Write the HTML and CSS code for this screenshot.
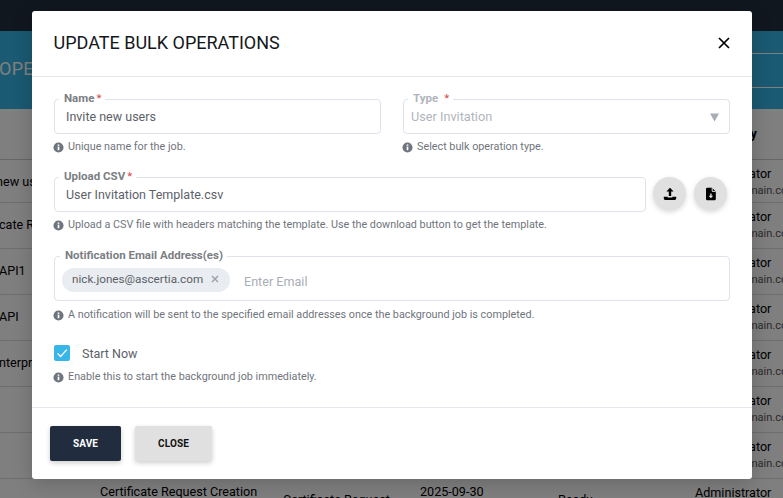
FILE: index.html
```html
<!DOCTYPE html>
<html lang="en">
<head>
<meta charset="utf-8">
<title>Update Bulk Operations</title>
<link rel="stylesheet" href="styles.css">
</head>
<body>
<div class="page">
  <div class="topbar"></div>
  <div class="band">
    <div class="band-title">OPERATIONS</div>
    <div class="band-lines"><i></i><i></i></div>
  </div>
  <div class="table">
    <div class="thead"><span class="c-by">Created By</span></div>
    <div class="row r1"><span class="c-a">new users</span><span class="c-by"><b>Administrator</b><small>admin@domain.com</small></span></div>
    <div class="row"><span class="c-a">cate Request</span><span class="c-by"><b>Administrator</b><small>admin@domain.com</small></span></div>
    <div class="row"><span class="c-a">API1</span><span class="c-by"><b>Administrator</b><small>admin@domain.com</small></span></div>
    <div class="row"><span class="c-a">API</span><span class="c-by"><b>Administrator</b><small>admin@domain.com</small></span></div>
    <div class="row"><span class="c-a">nterprise</span><span class="c-by"><b>Administrator</b><small>admin@domain.com</small></span></div>
    <div class="row"><span class="c-a"></span><span class="c-by"><b>Administrator</b><small>admin@domain.com</small></span></div>
    <div class="row"><span class="c-a"></span><span class="c-by"><b>Administrator</b><small>admin@domain.com</small></span></div>
    <div class="row last">
      <span class="c-a"></span>
      <span class="c-name">Certificate Request Creation</span>
      <span class="c-type">Certificate Request</span>
      <span class="c-date">2025-09-30</span>
      <span class="c-status">Ready</span>
      <span class="c-by"><b>Administrator</b></span>
    </div>
  </div>
  <div class="overlay"></div>
</div>

<section class="modal">
  <header class="modal-head">
    <h1>UPDATE BULK OPERATIONS</h1>
    <svg class="close-x" viewBox="0 0 12 12"><path d="M1 1l10 10M11 1L1 11"/></svg>
  </header>

  <div class="modal-body">
    <div class="two">
      <div class="field">
        <div class="box">
          <label class="lbl">Name<em>*</em></label>
          <span class="val">Invite new users</span>
        </div>
        <p class="help"><svg class="info" viewBox="0 0 12 12"><circle cx="6" cy="6" r="5.5"/><rect x="5.1" y="5" width="1.8" height="4" fill="#fff"/><rect x="5.1" y="2.7" width="1.8" height="1.5" fill="#fff"/></svg>Unique name for the job.</p>
      </div>
      <div class="field">
        <div class="box disabled">
          <label class="lbl">Type<em class="gap">*</em></label>
          <span class="val">User Invitation</span>
          <svg class="caret" viewBox="0 0 10 9"><path d="M0 0h10L5 9z"/></svg>
        </div>
        <p class="help"><svg class="info" viewBox="0 0 12 12"><circle cx="6" cy="6" r="5.5"/><rect x="5.1" y="5" width="1.8" height="4" fill="#fff"/><rect x="5.1" y="2.7" width="1.8" height="1.5" fill="#fff"/></svg>Select bulk operation type.</p>
      </div>
    </div>

    <div class="field upload">
      <div class="upload-row">
        <div class="box grow">
          <label class="lbl">Upload CSV<em>*</em></label>
          <span class="val">User Invitation Template.csv</span>
        </div>
        <button class="round" type="button" aria-label="Upload">
          <svg viewBox="0 0 14 14"><path d="M7 0.8L10.6 4.6H8.2V9H5.8V4.6H3.4z"/><path d="M0.8 9.8H4.6V10.6H9.4V9.8H13.2V11.6Q13.2 13 11.8 13H2.2Q0.8 13 0.8 11.6z"/></svg>
        </button>
        <button class="round second" type="button" aria-label="Download template">
          <svg viewBox="0 0 14 14"><path fill-rule="evenodd" d="M3.2 0.8H8L11.8 4.6V12Q11.8 13.2 10.6 13.2H3.2Q2 13.2 2 12V2Q2 0.8 3.2 0.8ZM6.2 6.6V8.8H4.6L6.9 11.2L9.2 8.8H7.6V6.6Z"/><path class="fold" d="M8.2 1V4.4H11.6"/></svg>
        </button>
      </div>
      <p class="help"><svg class="info" viewBox="0 0 12 12"><circle cx="6" cy="6" r="5.5"/><rect x="5.1" y="5" width="1.8" height="4" fill="#fff"/><rect x="5.1" y="2.7" width="1.8" height="1.5" fill="#fff"/></svg>Upload a CSV file with headers matching the template. Use the download button to get the template.</p>
    </div>

    <div class="field email">
      <div class="box chips">
        <label class="lbl wide">Notification Email Address(es)</label>
        <span class="chip"><span class="chip-text">nick.jones@ascertia.com</span><svg class="chip-x" viewBox="0 0 8 8"><path d="M1 1l6 6M7 1L1 7"/></svg></span>
        <span class="placeholder">Enter Email</span>
      </div>
      <p class="help roomy"><svg class="info" viewBox="0 0 12 12"><circle cx="6" cy="6" r="5.5"/><rect x="5.1" y="5" width="1.8" height="4" fill="#fff"/><rect x="5.1" y="2.7" width="1.8" height="1.5" fill="#fff"/></svg>A notification will be sent to the specified email addresses once the background job is completed.</p>
    </div>

    <div class="check-row">
      <span class="check"><svg viewBox="0 0 16 16"><path d="M3.5 8.4L6.6 11.5L12.8 4.6"/></svg></span>
      <span class="check-label">Start Now</span>
    </div>
    <p class="help tight"><svg class="info" viewBox="0 0 12 12"><circle cx="6" cy="6" r="5.5"/><rect x="5.1" y="5" width="1.8" height="4" fill="#fff"/><rect x="5.1" y="2.7" width="1.8" height="1.5" fill="#fff"/></svg>Enable this to start the background job immediately.</p>
  </div>

  <footer class="modal-foot">
    <button class="btn save" type="button">SAVE</button>
    <button class="btn cancel" type="button">CLOSE</button>
  </footer>
</section>
</body>
</html>
```
FILE: styles.css
```css
* { box-sizing: border-box; }
html, body { margin: 0; padding: 0; height: 100%; }
body {
  width: 783px;
  height: 498px;
  overflow: hidden;
  position: relative;
  font-family: Roboto, "Liberation Sans", sans-serif;
  background: #fff;
}

/* page behind the dialog */
.page { position: relative; width: 783px; height: 498px; overflow: hidden; background: #fff; }
.topbar { height: 31px; background: #222f3e; }
.band {
  height: 78px;
  background: #35b4e4;
  position: relative;
  display: flex;
  align-items: center;
}
.band-title { font-size: 18px; letter-spacing: 0.3px; color: #fff; margin-left: -1px; white-space: nowrap; margin-top: -4px; }
.band-lines { position: absolute; right: 0; top: 22px; width: 100px; }
.band-lines i { display: block; height: 1px; background: #fff; margin-bottom: 33px; }
.table { background: #fff; color: #000; font-size: 12.6px; }
.thead { height: 51px; border-bottom: 1px solid #ccc; position: relative; font-weight: 700; }
.thead .c-by { position: absolute; left: 695px; top: 17px; white-space: nowrap; }
.row { height: 46px; border-bottom: 1px solid #ddd; position: relative; white-space: nowrap; }
.row.r1 { height: 43px; }
.row span { position: absolute; }
.c-a { left: -1px; top: 14px; width: 33px; overflow: hidden; }
.r1 .c-a { text-indent: -3px; }
.row .c-by { left: 695px; top: 6px; }
.c-by b { display: block; font-weight: 400; line-height: 16px; }
.c-by small { display: block; font-size: 11px; color: #555; margin-top: 2px; line-height: 14px; }
.row.last { border: 0; }
.c-name { left: 100px; top: 5px; line-height: 16px; }
.c-type { left: 283px; top: 13px; line-height: 16px; }
.c-date { left: 420px; top: 5px; line-height: 16px; }
.c-status { left: 558px; top: 13px; line-height: 16px; }
.overlay { position: absolute; inset: 0; background: rgba(0,0,0,.5); }

/* dialog */
.modal {
  position: absolute;
  left: 32px;
  top: 11px;
  width: 720px;
  height: 468px;
  background: #fff;
  border-radius: 3px;
  box-shadow: 0 4px 20px rgba(0,0,0,.2);
  display: flex;
  flex-direction: column;
}
.modal-head {
  height: 66px;
  flex: none;
  border-bottom: 1px solid #e4e6eb;
  display: flex;
  align-items: center;
  justify-content: space-between;
  padding: 0 22px;
}
.modal-head h1 { margin: -2px 0 0 -0.5px; font-size: 18px; font-weight: 400; color: #14181d; }
.close-x { width: 12px; height: 12px; margin-top: -1px; stroke: #000; stroke-width: 1.7; fill: none; }

.modal-body { flex: 1; padding: 22px 22px 0; display: flex; flex-direction: column; }
.two { display: grid; grid-template-columns: 327px 327px; column-gap: 22px; }
.box {
  position: relative;
  height: 35px;
  border: 1px solid #dfe2e8;
  border-radius: 4px;
  padding: 0 11px;
  display: flex;
  align-items: center;
  font-size: 12.5px;
  color: #5c6168;
  background: #fff;
}
.val { line-height: 16px; margin-top: 1px; }
.lbl {
  position: absolute;
  left: 4px;
  top: -9px;
  background: #fff;
  padding: 0 4px 0 5px;
  font-size: 11.5px;
  line-height: 14px;
  font-weight: 700;
  color: #7b7e84;
}
.lbl em { font-style: normal; color: #d8444a; margin-left: 2px; font-weight: 400; }
.lbl em.gap { margin-left: 6px; }
.disabled { color: #b0b5bd; }
.disabled .lbl { color: #b0b5bd; }
.disabled .val { margin-left: -4px; font-size: 12.7px; }
.caret { width: 9px; height: 9px; position: absolute; right: 10px; top: 13px; fill: #a9aeb6; }
.help {
  margin: 6px 0 0;
  font-size: 10.8px;
  line-height: 14px;
  color: #70757c;
  display: flex;
  align-items: center;
  white-space: nowrap;
}
.help.roomy { margin-top: 7px; }
.info { width: 11px; height: 11px; flex: none; margin: 0 4px 0 -1px; fill: #6e757f; }

.upload { margin-top: 23px; }
.upload-row { display: flex; align-items: flex-start; }
.grow { flex: none; width: 592px; }
.round {
  width: 33px;
  height: 33px;
  border: 0;
  padding: 0;
  border-radius: 50%;
  background: #e0e0e0;
  margin-left: 7px;
  box-shadow: 0 2px 5px rgba(0,0,0,.16);
  display: flex;
  align-items: center;
  justify-content: center;
}
.round.second { margin-left: 8px; }
.round svg { width: 14px; height: 14px; fill: #000; }
.round .fold { fill: none; stroke: #e0e0e0; stroke-width: 1; }

.email { margin-top: 24px; }
.chips { height: 45px; padding: 0 7px; align-items: flex-start; font-size: 12.6px; }
.wide { left: 5px; }
.chip {
  margin-top: 11px;
  height: 24px;
  width: 168px;
  flex: none;
  border-radius: 12px;
  background: #e9ecf0;
  display: flex;
  align-items: center;
  padding: 0 0 2px 10px;
  font-size: 11.7px;
  color: #5a5f66;
  white-space: nowrap;
}
.chip-text { width: 139px; flex: none; }
.chip-x { width: 8px; height: 8px; stroke: #9a9fa6; stroke-width: 1.4; fill: none; }
.placeholder { margin: 17px 0 0 14px; color: #a9aeb6; line-height: 16px; }

.check-row { display: flex; align-items: center; margin-top: 23px; height: 16px; }
.check { width: 16px; height: 16px; border-radius: 2px; background: #38b6e8; display: flex; }
.check svg { width: 16px; height: 16px; stroke: #fff; stroke-width: 1.3; fill: none; }
.check-label { margin-left: 12px; font-size: 12.5px; color: #5c6168; }
.help.tight { margin-top: 9px; }

.modal-foot {
  height: 72px;
  flex: none;
  border-top: 1px solid #e4e6eb;
  padding: 18px 18px 0;
  display: flex;
  align-items: flex-start;
  gap: 14px;
}
.btn {
  height: 35px;
  border: 0;
  border-radius: 2px;
  font-family: inherit;
  font-size: 10px;
  font-weight: 700;
  letter-spacing: .1px;
  box-shadow: 0 2px 5px rgba(0,0,0,.2);
}
.save { width: 71px; background: #212d3f; color: #fff; }
.cancel { width: 77px; background: #e0e0e0; color: #111; }
```
